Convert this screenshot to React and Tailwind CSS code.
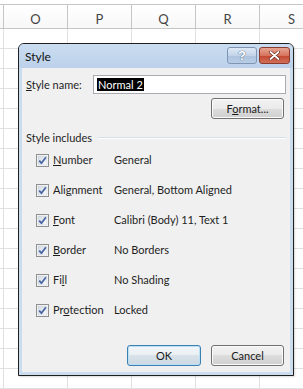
const COLS = ["O", "P", "Q", "R", "S"];
const ROWS = Array.from({ length: 18 }, (_, i) => i);

const ITEMS = [
  { pre: "", key: "N", post: "umber", value: "General" },
  { pre: "Ali", key: "g", post: "nment", value: "General, Bottom Aligned" },
  { pre: "", key: "F", post: "ont", value: "Calibri (Body) 11, Text 1" },
  { pre: "", key: "B", post: "order", value: "No Borders" },
  { pre: "Fi", key: "l", post: "l", value: "No Shading" },
  { pre: "Pr", key: "o", post: "tection", value: "Locked" },
];

function Check() {
  return (
    <svg width="13" height="13" viewBox="0 0 13 13" className="shrink-0">
      <defs>
        <linearGradient id="cbfill" x1="0" y1="0" x2="1" y2="1">
          <stop offset="0" stopColor="#d3dae3" />
          <stop offset="1" stopColor="#fbfcfd" />
        </linearGradient>
      </defs>
      <rect x="0.5" y="0.5" width="12" height="12" fill="#fff" stroke="#8f8f8f" />
      <rect x="2" y="2" width="9" height="9" fill="url(#cbfill)" stroke="#c6cbd2" strokeWidth="0.6" />
      <path d="M3.2 6.6 L5.4 9.2 L9.9 3.3" fill="none" stroke="#4a67a3" strokeWidth="1.8" strokeLinejoin="round" />
    </svg>
  );
}

function WinButton({ children, primary, className }) {
  return (
    <div
      className={
        "flex h-[21px] items-center justify-center rounded-[3px] border text-[11px] text-[#1a1a1a] " +
        (primary
          ? "border-[#3c7fb1] bg-[linear-gradient(#f2f6f9,#eaeff3_50%,#d9e2ea_50%,#cdd8e2)] shadow-[inset_0_0_0_1px_#b9e0f5] "
          : "border-[#707070] bg-[linear-gradient(#f2f2f2,#ebebeb_50%,#dddddd_50%,#cfcfcf)] shadow-[inset_0_0_0_1px_#fbfbfb] ") +
        className
      }
    >
      {children}
    </div>
  );
}

export default function App() {
  return (
    <div className="relative h-[389px] w-[303px] overflow-hidden bg-white font-['Lato',sans-serif]">
      {/* worksheet behind the dialog */}
      <div className="pt-[4px]">
        <div className="flex h-[25px] border-y border-[#c6c6c6] bg-[linear-gradient(#ffffff,#f7f7f7)]">
          <div className="w-[4px] shrink-0 border-r border-[#c6c6c6]" />
          {COLS.map(c => (
            <div
              key={c}
              className="flex w-[64px] shrink-0 items-end justify-center border-r border-[#c6c6c6] pb-[1px] text-[13px] leading-[16px] text-[#444]"
            >
              {c}
            </div>
          ))}
        </div>
        {ROWS.map(r => (
          <div key={r} className="flex h-[20px] border-b border-[#e0e0e0]">
            <div className="w-[4px] shrink-0 border-r border-[#e0e0e0]" />
            {COLS.map(c => (
              <div key={c} className="w-[64px] shrink-0 border-r border-[#e0e0e0]" />
            ))}
          </div>
        ))}
      </div>

      {/* Style dialog */}
      <div className="absolute left-[18px] top-[43px] flex h-[333px] w-[276px] flex-col rounded-t-[6px] border border-[#1f1f1f] bg-[#cbdcef] shadow-[1px_1px_2px_rgba(0,0,0,0.15)]">
        <div className="flex h-[24px] shrink-0 items-start rounded-t-[5px] bg-[linear-gradient(#cadcf0,#bcd1ea)] pl-[6px] pr-[3px]">
          <span className="mt-[6px] text-[12px] leading-[14px] text-[#111]">Style</span>
          <div className="ml-auto mt-[3px] flex gap-[2px]">
            <div className="flex h-[17px] w-[30px] items-center justify-center rounded-[3px] border border-[#7e96b4] bg-[linear-gradient(#dfe9f5,#c3d4e9_50%,#adc3de_50%,#b9cde5)]">
              <span className="font-['Liberation_Sans',sans-serif] text-[13px] font-bold leading-[13px] text-white [text-shadow:0_0_1px_#4b6283,0_0_1px_#4b6283]">?</span>
            </div>
            <div className="flex h-[17px] w-[31px] items-center justify-center rounded-[3px] border border-[#8b3b2e] bg-[linear-gradient(#e6a593,#d7745e_50%,#c4452e_50%,#d0705a)]">
              <svg width="11" height="9" viewBox="0 0 11 9">
                <path d="M1.5 1 L9.5 8 M9.5 1 L1.5 8" stroke="#5a1f16" strokeWidth="3" strokeLinecap="round" />
                <path d="M1.5 1 L9.5 8 M9.5 1 L1.5 8" stroke="#ffffff" strokeWidth="1.8" strokeLinecap="round" />
              </svg>
            </div>
          </div>
        </div>

        <div className="mx-[3px] flex h-[304px] shrink-0 flex-col bg-[#f0f0f0] px-[4px] text-[11px] leading-[14px] text-[#1e1e1e]">
          <div className="mt-[7px] flex items-center">
            <span className="w-[67px] shrink-0">
              <span className="underline underline-offset-1">S</span>tyle name:
            </span>
            <div className="flex h-[19px] flex-1 items-center border border-[#a9abb0] bg-white pl-[3px]">
              <span className="bg-black px-[1px] text-[11px] leading-[13px] text-white">Normal 2</span>
            </div>
          </div>

          <WinButton className="ml-auto mr-[2px] mt-[4px] w-[73px]">
            <span>
              F<span className="underline underline-offset-1">o</span>rmat...
            </span>
          </WinButton>

          <div className="mt-[12px] flex h-[14px] items-center">
            <span>Style includes</span>
            <div className="ml-[6px] h-[2px] flex-1 border-y border-t-[#d5dfe5] border-b-white" />
          </div>

          <div className="flex flex-col">
            {ITEMS.map(it => (
              <div key={it.value} className="flex h-[30px] items-center pl-[10px]">
                <Check />
                <span className="ml-[4px] w-[61px] shrink-0">
                  {it.pre}
                  <span className="underline underline-offset-1">{it.key}</span>
                  {it.post}
                </span>
                <span>{it.value}</span>
              </div>
            ))}
          </div>

          <div className="mt-[20px] flex justify-end gap-[10px] pr-[2px]">
            <WinButton primary className="w-[74px]">OK</WinButton>
            <WinButton className="w-[73px]">Cancel</WinButton>
          </div>
        </div>
      </div>
    </div>
  );
}
